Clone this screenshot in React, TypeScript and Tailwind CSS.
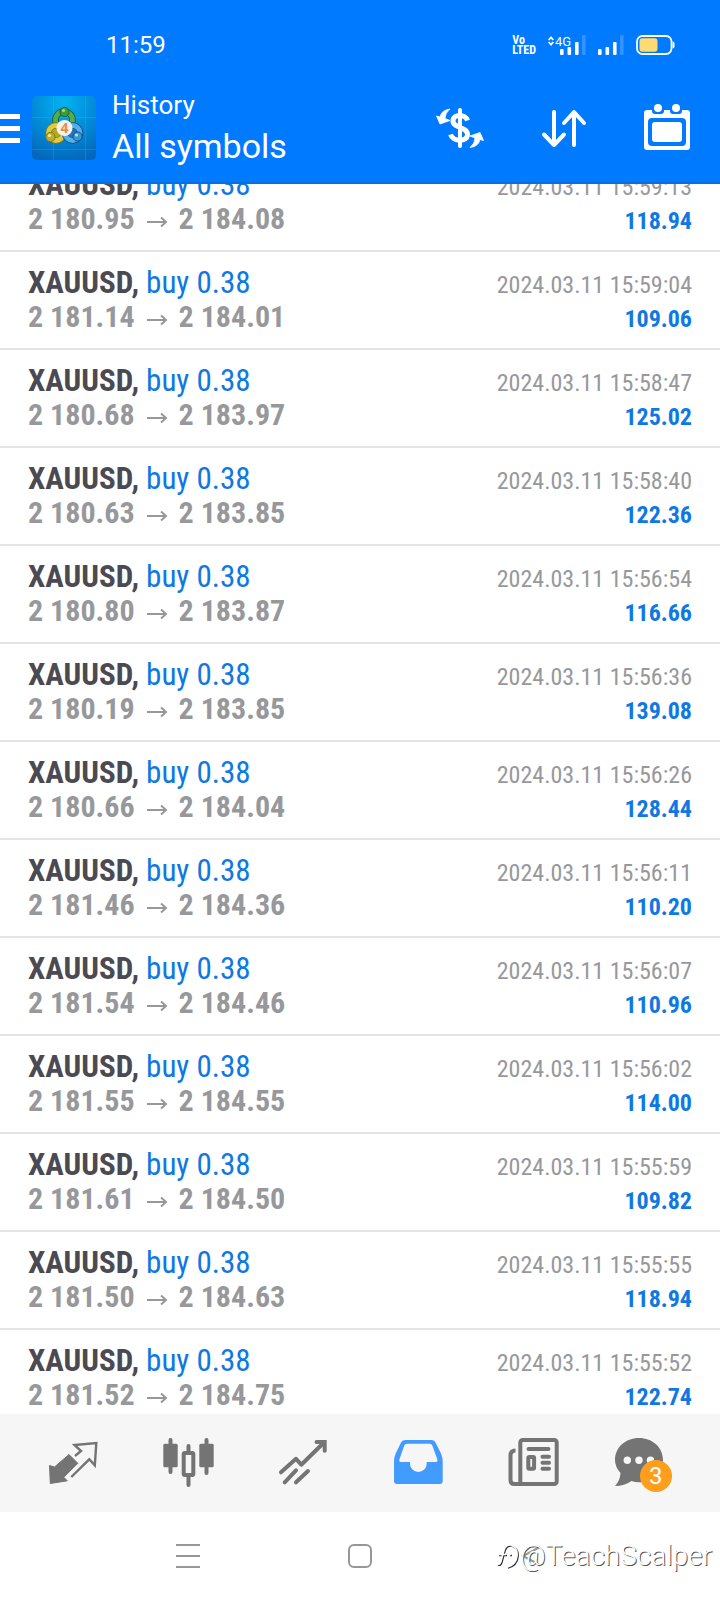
import React from 'react';

interface Deal {
    open: string;
    close: string;
    time: string;
    profit: string;
}

const DEALS: Deal[] = [
    { open: '2 180.95', close: '2 184.08', time: '2024.03.11 15:59:13', profit: '118.94' },
    { open: '2 181.14', close: '2 184.01', time: '2024.03.11 15:59:04', profit: '109.06' },
    { open: '2 180.68', close: '2 183.97', time: '2024.03.11 15:58:47', profit: '125.02' },
    { open: '2 180.63', close: '2 183.85', time: '2024.03.11 15:58:40', profit: '122.36' },
    { open: '2 180.80', close: '2 183.87', time: '2024.03.11 15:56:54', profit: '116.66' },
    { open: '2 180.19', close: '2 183.85', time: '2024.03.11 15:56:36', profit: '139.08' },
    { open: '2 180.66', close: '2 184.04', time: '2024.03.11 15:56:26', profit: '128.44' },
    { open: '2 181.46', close: '2 184.36', time: '2024.03.11 15:56:11', profit: '110.20' },
    { open: '2 181.54', close: '2 184.46', time: '2024.03.11 15:56:07', profit: '110.96' },
    { open: '2 181.55', close: '2 184.55', time: '2024.03.11 15:56:02', profit: '114.00' },
    { open: '2 181.61', close: '2 184.50', time: '2024.03.11 15:55:59', profit: '109.82' },
    { open: '2 181.50', close: '2 184.63', time: '2024.03.11 15:55:55', profit: '118.94' },
    { open: '2 181.52', close: '2 184.75', time: '2024.03.11 15:55:52', profit: '122.74' },
];

const StatusBar: React.FC = () => (
    <div className="flex h-[72px] items-center justify-between pl-[106px] pr-[45px] pt-[18px]">
        <span className="text-2xl">11:59</span>
        <div className="flex items-center gap-3">
            <div className="flex flex-col font-['Roboto_Condensed','Liberation_Sans_Narrow',sans-serif] text-[12px] font-bold leading-[10px]">
                <span>Vo</span>
                <span>LTED</span>
            </div>
            <svg className="h-5 w-[38px]" viewBox="0 0 38 20" fill="currentColor">
                <path d="M0 4.500L3 1l3 3.500-1.200 1L3 3.700 1.200 5.500zM0 7.500L3 11l3-3.500-1.200-1L3 8.300 1.200 6.500z" />
                <text x="7" y="11" fontSize="13" fontFamily="Roboto">4G</text>
                <rect x="12" y="14" width="3.600" height="6" rx="1" />
                <rect x="19.500" y="12" width="3.600" height="8" rx="1" />
                <rect x="27" y="7" width="3.600" height="13" rx="1" />
                <rect x="34" y="0" width="3.600" height="20" rx="1" opacity="0.2" />
            </svg>
            <svg className="h-5 w-[26px]" viewBox="0 0 26 20" fill="currentColor">
                <rect x="0" y="14" width="3.600" height="6" rx="1" />
                <rect x="7.500" y="12" width="3.600" height="8" rx="1" />
                <rect x="15" y="7" width="3.600" height="13" rx="1" />
                <rect x="22" y="0" width="3.600" height="20" rx="1" opacity="0.2" />
            </svg>
            <svg className="h-5 w-[39px]" viewBox="0 0 39 20">
                <rect x="1" y="1" width="34.500" height="18" rx="5.500" fill="none" stroke="currentColor" strokeWidth="1.800" />
                <rect x="3.500" y="3.300" width="18" height="13.500" rx="3" fill="#ffdc73" />
                <path d="M36.500 6.500q2 0 2 2v3q0 2-2 2z" fill="currentColor" />
            </svg>
        </div>
    </div>
);

const AppLogo: React.FC = () => (
    <svg className="h-16 w-16" viewBox="0 0 64 64">
        <defs>
            <radialGradient id="logoBg" cx="0.5" cy="0.1" r="0.95">
                <stop offset="0" stopColor="#02b2f2" />
                <stop offset="0.55" stopColor="#0388d6" />
                <stop offset="1" stopColor="#0466b8" />
            </radialGradient>
        </defs>
        <rect width="64" height="64" rx="5" fill="url(#logoBg)" />
        <path d="M21.500 0v64M53.500 0v64M0 21.500h64M0 53.500h64" stroke="#5cc4f2" strokeWidth="0.700" opacity="0.3" />
        <g strokeWidth="1">
            <circle cx="32" cy="24" r="8.500" fill="none" stroke="#175c2a" strokeWidth="6.500" />
            <circle cx="32" cy="24" r="8.500" fill="none" stroke="#57ab4c" strokeWidth="4.800" />
            <circle cx="24" cy="37" r="7.500" fill="#b8a828" stroke="#7d7a16" strokeWidth="6.500" />
            <circle cx="24" cy="37" r="7.500" fill="none" stroke="#dccb43" strokeWidth="4.800" />
            <circle cx="40.500" cy="37" r="7.500" fill="#2378bd" stroke="#0d518f" strokeWidth="6.500" />
            <circle cx="40.500" cy="37" r="7.500" fill="none" stroke="#56b0e8" strokeWidth="4.800" />
            <circle cx="32.500" cy="16" r="4.600" fill="#3d9b3b" stroke="#1c6528" />
            <circle cx="31.500" cy="14.500" r="1.600" fill="#a2dc8c" />
            <circle cx="18.500" cy="41" r="4.600" fill="#c0ac2a" stroke="#7d7a16" />
            <circle cx="17.500" cy="39.500" r="1.600" fill="#f3eb90" />
            <circle cx="45.500" cy="40.500" r="4.600" fill="#3a94d8" stroke="#0d518f" />
            <circle cx="44.500" cy="39" r="1.600" fill="#b3e0f8" />
        </g>
        <circle cx="32.500" cy="32" r="8" fill="#f2f2ee" />
        <text x="32.500" y="37" textAnchor="middle" fontSize="14" fontWeight="700" fontFamily="Open Sans" fill="#f08c42">4</text>
    </svg>
);

const CurrencyIcon: React.FC = () => (
    <svg className="h-12 w-12" viewBox="0 0 48 48" fill="none" stroke="currentColor" strokeWidth="5">
        <path d="M24 6v36" strokeWidth="4" strokeLinecap="round" />
        <path d="M31.500 16.500C29.500 10 17 9.500 17 17c0 7.500 14.500 5.500 14.500 13.500C31.500 38.500 17 38 14.500 30.500" />
        <path d="M14 5Q5.500 6 4 13L.5 12 4 20l10-3.500-5-2Q9 9 14 5z" fill="currentColor" strokeWidth="0.800" />
        <path d="M34 43.500Q42.500 42.500 44 35.500l3.500 1-3.500-8-10 3.500 5 2q0 5.500-5 9.500z" fill="currentColor" strokeWidth="0.800" />
    </svg>
);

const SortIcon: React.FC = () => (
    <svg className="h-12 w-12" viewBox="0 0 48 48" fill="none" stroke="currentColor" strokeWidth="4" strokeLinecap="round" strokeLinejoin="round">
        <path d="M14 8v33M4 30.500L14 41l10-10.500M34 41V9M24 19L34 8l10 11" />
    </svg>
);

const CalendarIcon: React.FC = () => (
    <svg className="h-12 w-12" viewBox="0 0 48 48">
        <rect x="0" y="6" width="46" height="40" rx="3" fill="currentColor" />
        <rect x="4" y="14" width="38" height="28" rx="4" fill="#007aff" />
        <rect x="8" y="18" width="30" height="20" rx="3" fill="currentColor" />
        <path d="M8 5h12v2q0 3-3 3h-6q-3 0-3-3zM26 5h12v2q0 3-3 3h-6q-3 0-3-3z" fill="#007aff" />
        <circle cx="14" cy="4" r="4" fill="currentColor" />
        <circle cx="32" cy="4" r="4" fill="currentColor" />
    </svg>
);

const Header: React.FC = () => (
    <header className="shrink-0 border-b-2 border-[#0a6fdb] bg-[#007aff] text-white">
        <StatusBar />
        <div className="flex h-[110px] items-center pr-7 pt-[2px]">
            <button className="flex w-5 flex-col gap-[7px]" aria-label="Menu">
                <span className="h-[5px] bg-white" />
                <span className="h-[5px] bg-white" />
                <span className="h-[5px] bg-white" />
            </button>
            <div className="ml-3">
                <AppLogo />
            </div>
            <div className="ml-4 flex-1">
                <p className="text-[26px] leading-9">History</p>
                <h1 className="text-[34px] leading-[46px]">All symbols</h1>
            </div>
            <div className="flex gap-14">
                <button aria-label="Symbol"><CurrencyIcon /></button>
                <button aria-label="Sort"><SortIcon /></button>
                <button aria-label="Period"><CalendarIcon /></button>
            </div>
        </div>
    </header>
);

const DealRow: React.FC<{ deal: Deal }> = ({ deal }) => (
    <li className="flex h-[98px] items-baseline justify-between border-b-2 border-[#e4e4e4] px-7 pt-[14px] font-['Roboto_Condensed','Liberation_Sans_Narrow',sans-serif]">
        <div>
            <p className="text-[31px] leading-[34px] text-[#0f78e2]">
                <span className="font-bold text-[#4b4a52]">XAUUSD,</span> buy 0.38
            </p>
            <p className="flex items-center text-[30px] font-bold leading-[34px] text-[#97989b]">
                {deal.open}
                <svg className="mx-[10px] h-5 w-6" viewBox="0 0 24 20" fill="none" stroke="currentColor" strokeWidth="2">
                    <path d="M2 13h19M16 8.500l5 4.500-5 4.500" />
                </svg>
                {deal.close}
            </p>
        </div>
        <div className="text-right text-2xl">
            <p className="leading-[34px] text-[#97989b]">{deal.time}</p>
            <p className="font-bold leading-[34px] text-[#0f78e2]">{deal.profit}</p>
        </div>
    </li>
);

const TabIcon: React.FC<{ children: React.ReactNode }> = ({ children }) => (
    <svg className="h-16 w-16" viewBox="0 0 64 64" fill="none" stroke="currentColor" strokeWidth="4">
        {children}
    </svg>
);

const TabBar: React.FC = () => (
    <nav className="grid h-[98px] shrink-0 grid-cols-6 items-center justify-items-center bg-[#f6f6f7] px-4 text-[#747474]">
        <button aria-label="Quotes">
            <TabIcon>
                <path d="M8.500 34.500l5 1.500 14.500-12.500 8.800 8.800-14 14 3.500 3.500-17 2.700z" fill="currentColor" strokeWidth="1" strokeLinejoin="round" />
                <path d="M34 25l6-5-6.500-6 21.800-2-1.500 22.300-5.500-6L30.300 46" strokeWidth="2.400" />
            </TabIcon>
        </button>
        <button aria-label="Charts">
            <TabIcon>
                <path d="M14.500 9v32M32.500 15v7M32.500 44v10M50.500 9v33" strokeLinecap="round" />
                <rect x="7.300" y="12.700" width="14.400" height="23.600" rx="1.500" fill="currentColor" stroke="none" />
                <rect x="43.300" y="12.700" width="14.400" height="23.600" rx="1.500" fill="currentColor" stroke="none" />
                <rect x="27.700" y="22" width="9.600" height="22" rx="1" />
            </TabIcon>
        </button>
        <button aria-label="Trade">
            <TabIcon>
                <path d="M10 41.300l15-13.500 5.300 5.900L53 11.500M13.700 51.300L25 39.300M25 51.300L37 40" strokeLinecap="round" strokeLinejoin="round" />
                <path d="M45.500 11h8.200v8.700" strokeLinecap="round" />
            </TabIcon>
        </button>
        <button className="text-[#429cff]" aria-label="History">
            <TabIcon>
                <path
                    fillRule="evenodd"
                    d="M20 9h27q2.500 0 3.500 2.500l5.500 11q1.700 4 1.700 8V50q0 3-3 3H12q-3 0-3-3V30.500q0-4 1.700-8L16 11.500Q17 9 20 9zM22 12.700q-2 0-2.700 1.800L14.500 28q-.8 3 1.200 3H25v1.700a8.350 8.350 0 0 0 16.700 0V31H51q2 0 1.200-3l-4.900-13.500q-.7-1.800-2.500-1.800z"
                    fill="currentColor"
                    stroke="none"
                />
            </TabIcon>
        </button>
        <button aria-label="News">
            <TabIcon>
                <rect x="20.300" y="9" width="36.400" height="44" rx="2.500" />
                <path d="M15.500 19.500q-5 0-5 5V49q0 4 4 4H22" />
                <path d="M28.500 18h20M42.500 25.700h6.500M42.500 31.700h6.500M42.500 37.700h6.500" strokeLinecap="round" />
                <rect x="28.300" y="26" width="5.800" height="11.700" rx="1" />
            </TabIcon>
        </button>
        <button className="relative" aria-label="Messages">
            <TabIcon>
                <path d="M24 7C10.500 7 0 16.500 0 29q0 7 5.500 13-.5 8-5.500 13 9.500 0 16.500-5 3.500 1.300 7.500 1.300c13.500 0 24-9.800 24-22.300S37.500 7 24 7z" fill="currentColor" stroke="none" />
                <g fill="#f6f6f7" stroke="none">
                    <circle cx="12.300" cy="29.300" r="3.700" />
                    <circle cx="24" cy="29.300" r="3.700" />
                    <circle cx="35.500" cy="29.300" r="3.700" />
                </g>
            </TabIcon>
            <span className="absolute bottom-[3px] right-[7px] h-8 w-8 rounded-full bg-[#ff9d1c] text-center text-2xl leading-8 text-white">3</span>
        </button>
    </nav>
);

const SystemNav: React.FC = () => (
    <footer className="relative grid h-22 shrink-0 grid-cols-3 items-center justify-items-center bg-white px-[102px]">
        <button className="flex w-6 flex-col gap-[9px]" aria-label="Recent apps">
            <span className="h-[2px] bg-[#979797]" />
            <span className="h-[2px] bg-[#979797]" />
            <span className="h-[2px] bg-[#979797]" />
        </button>
        <button className="h-6 w-6 rounded-[6px] border-2 border-[#979797]" aria-label="Home" />
        <button aria-label="Back">
            <svg className="h-6 w-6" viewBox="0 0 24 24" fill="none" stroke="#979797" strokeWidth="2">
                <path d="M20 3L3 12l17 9" />
            </svg>
        </button>
        <div className="absolute bottom-7 right-2 flex items-center text-white">
            <svg className="h-8 w-6" viewBox="0 0 24 32" fill="none" strokeWidth="1.600">
                <g stroke="#333">
                    <path d="M2 25q3 1 4-3l3-11q2-6 7-5M3 15.500h8M14 15.500h2" />
                    <path d="M16 6q7 3 6 11-1 9-10 11" />
                </g>
                <g stroke="#fff">
                    <path d="M1 24q3 1 4-3l3-11q2-6 7-5M2 14.500h8M13 14.500h2" />
                    <path d="M15 5q7 3 6 11-1 9-10 11" />
                </g>
            </svg>
            <span className="text-[28px] font-light leading-8 [text-shadow:1px_1px_0_#555]">@TeachScalper</span>
        </div>
    </footer>
);

export default function App() {
    return (
        <div className="flex h-screen flex-col bg-white font-['Roboto',sans-serif]">
            <Header />
            <main className="flex-1 overflow-hidden">
                {/* list is scrolled part way into the first row */}
                <ul className="-mt-[30px]">
                    {DEALS.map(deal => (
                        <DealRow key={deal.time} deal={deal} />
                    ))}
                </ul>
            </main>
            <TabBar />
            <SystemNav />
        </div>
    );
}
